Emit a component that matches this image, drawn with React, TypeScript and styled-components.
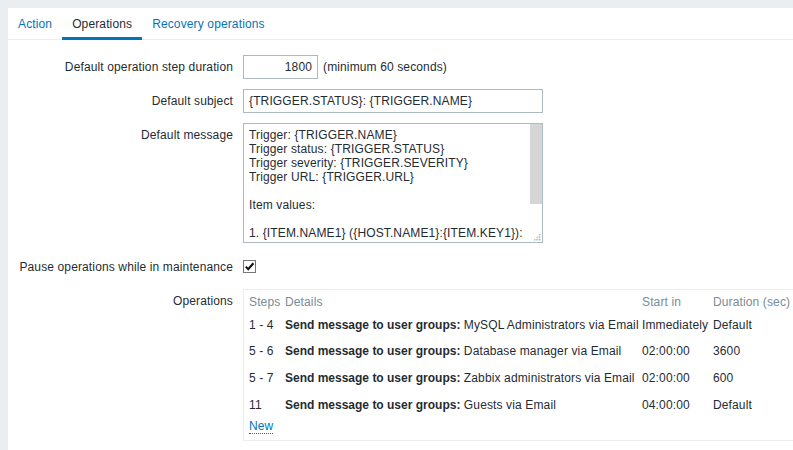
import React from "react";
import styled, { createGlobalStyle } from "styled-components";

const GlobalStyle = createGlobalStyle`
  html, body {
    margin: 0;
    padding: 0;
    overflow: hidden;
    background: #ebeef0;
  }
  body {
    font-family: "Liberation Sans", Arial, sans-serif;
    font-size: 12px;
    line-height: 14px;
    letter-spacing: 0.13px;
    color: #1f2c33;
  }
  b {
    letter-spacing: 0;
  }
`;

const Page = styled.div`
  padding: 8px 0 0 8px;
`;

const Panel = styled.div`
  background: #fff;
  width: 1000px;
  min-height: 460px;
`;

const TabBar = styled.ul`
  display: flex;
  margin: 0;
  padding: 0;
  list-style: none;
  height: 32px;
  box-sizing: border-box;
  border-bottom: 1px solid #ebeef0;
`;

const Tab = styled.li<{ $active?: boolean }>`
  height: 32px;
  box-sizing: border-box;
  margin-bottom: -1px;
  padding: 9px 10px 0;
  border-bottom: 3px solid ${(p) => (p.$active ? "#0275b8" : "transparent")};
  color: ${(p) => (p.$active ? "#1f2c33" : "#0275b8")};
  cursor: pointer;
`;

const FormList = styled.div`
  display: grid;
  grid-template-columns: 215px 1fr;
  column-gap: 10px;
  row-gap: 10px;
  padding: 15px 0 20px 10px;
`;

const Label = styled.label<{ $offset?: number }>`
  text-align: right;
  line-height: 24px;
  white-space: nowrap;
  padding-top: ${(p) => p.$offset ?? 0}px;
`;

const Field = styled.div<{ $top?: boolean }>`
  display: flex;
  align-items: ${(p) => (p.$top ? "flex-start" : "center")};
  gap: 5px;
  min-height: 24px;
  white-space: nowrap;
`;

const TextInput = styled.input<{ $width: number; $right?: boolean }>`
  width: ${(p) => p.$width}px;
  height: 24px;
  box-sizing: border-box;
  margin: 0;
  padding: 0 5px;
  border: 1px solid #acbbc2;
  background: #fff;
  font: inherit;
  letter-spacing: inherit;
  color: inherit;
  text-align: ${(p) => (p.$right ? "right" : "left")};
  outline: none;
`;

const MessageBox = styled.div`
  display: flex;
  width: 300px;
  height: 120px;
  box-sizing: border-box;
  border: 1px solid #acbbc2;
  background: #fff;
`;

const MessageText = styled.textarea`
  flex: 1;
  min-width: 0;
  margin: 0;
  border: 0;
  padding: 4px 5px;
  font: inherit;
  line-height: 14px;
  letter-spacing: inherit;
  color: inherit;
  background: transparent;
  resize: none;
  overflow: hidden;
  outline: none;
`;

const ScrollRail = styled.div`
  width: 12px;
  display: flex;
  flex-direction: column;
  justify-content: space-between;
`;

const ScrollThumb = styled.div`
  height: 80px;
  background: #d6d6d6;
`;

const Grip = styled.div`
  width: 8px;
  height: 8px;
  align-self: flex-end;
  margin: 0 1px 1px 0;
  background:
    linear-gradient(135deg, #fff 50%, transparent 50%),
    radial-gradient(circle, #a4acb0 0.8px, transparent 1px) 0 0 / 2.7px 2.7px;
`;

const CheckRow = styled.div`
  height: 26px;
  display: flex;
  align-items: center;
`;

const CheckBox = styled.span`
  width: 13px;
  height: 13px;
  box-sizing: border-box;
  border: 1px solid #767676;
  background: #fff;
  display: flex;
  align-items: center;
  justify-content: center;
`;

const OpBox = styled.div`
  width: 640px;
  border: 1px solid #ebeef0;
  padding: 0 5px;
`;

const OpTable = styled.table`
  border-collapse: collapse;
  border-spacing: 0;
  table-layout: fixed;
  width: 100%;

  th {
    padding: 5.3px 5px 2px 0;
    font-weight: normal;
    text-align: left;
    color: #768d99;
    white-space: nowrap;
  }
  td {
    padding: 6.33px 5px 6.33px 0;
    white-space: nowrap;
    vertical-align: top;
  }
`;

const NewCell = styled.td`
  && {
    padding: 1px 0 7px;
  }
`;

const Link = styled.a`
  color: #0275b8;
  text-decoration: none;
  border-bottom: 1px dotted #0275b8;
  cursor: pointer;
`;

const message = `Trigger: {TRIGGER.NAME}
Trigger status: {TRIGGER.STATUS}
Trigger severity: {TRIGGER.SEVERITY}
Trigger URL: {TRIGGER.URL}

Item values:

1. {ITEM.NAME1} ({HOST.NAME1}:{ITEM.KEY1}): {ITEM.VALUE1}
2. {ITEM.NAME2} ({HOST.NAME2}:{ITEM.KEY2}): {ITEM.VALUE2}
3. {ITEM.NAME3} ({HOST.NAME3}:{ITEM.KEY3}): {ITEM.VALUE3}

Original event ID: {EVENT.ID}`;

const operations = [
  { steps: "1 - 4", target: "MySQL Administrators via Email", start: "Immediately", duration: "Default" },
  { steps: "5 - 6", target: "Database manager via Email", start: "02:00:00", duration: "3600" },
  { steps: "5 - 7", target: "Zabbix administrators via Email", start: "02:00:00", duration: "600" },
  { steps: "11", target: "Guests via Email", start: "04:00:00", duration: "Default" },
];

const App: React.FC = () => {
  return (
    <Page>
      <GlobalStyle />
      <Panel>
        <TabBar>
          <Tab>Action</Tab>
          <Tab $active>Operations</Tab>
          <Tab>Recovery operations</Tab>
        </TabBar>

        <FormList>
          <Label>Default operation step duration</Label>
          <Field>
            <TextInput $width={75} $right defaultValue="1800" />
            <span>(minimum 60 seconds)</span>
          </Field>

          <Label>Default subject</Label>
          <Field>
            <TextInput $width={300} defaultValue="{TRIGGER.STATUS}: {TRIGGER.NAME}" />
          </Field>

          <Label>Default message</Label>
          <Field $top>
            <MessageBox>
              <MessageText defaultValue={message} spellCheck={false} />
              <ScrollRail>
                <ScrollThumb />
                <Grip />
              </ScrollRail>
            </MessageBox>
          </Field>

          <Label $offset={2}>Pause operations while in maintenance</Label>
          <CheckRow>
            <CheckBox>
              <svg width="11" height="11" viewBox="0 0 11 11">
                <path d="M1.8 5.6 L4.2 8.2 L9.4 2.2" fill="none" stroke="#111" strokeWidth="2.1" />
              </svg>
            </CheckBox>
          </CheckRow>

          <Label>Operations</Label>
          <Field $top>
            <OpBox>
              <OpTable>
                <colgroup>
                  <col style={{ width: 36 }} />
                  <col style={{ width: 357 }} />
                  <col style={{ width: 71 }} />
                  <col />
                </colgroup>
                <thead>
                  <tr>
                    <th>Steps</th>
                    <th>Details</th>
                    <th>Start in</th>
                    <th>Duration (sec)</th>
                  </tr>
                </thead>
                <tbody>
                  {operations.map((op) => (
                    <tr key={op.steps}>
                      <td>{op.steps}</td>
                      <td>
                        <b>Send message to user groups:</b> {op.target}
                      </td>
                      <td>{op.start}</td>
                      <td>{op.duration}</td>
                    </tr>
                  ))}
                </tbody>
                <tfoot>
                  <tr>
                    <NewCell colSpan={4}>
                      <Link>New</Link>
                    </NewCell>
                  </tr>
                </tfoot>
              </OpTable>
            </OpBox>
          </Field>
        </FormList>
      </Panel>
    </Page>
  );
};

export default App;
